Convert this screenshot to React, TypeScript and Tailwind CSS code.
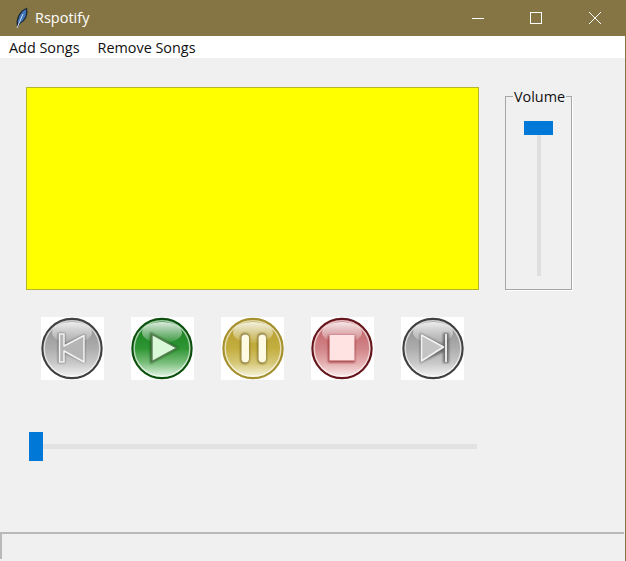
import { ReactNode } from "react";

const font = "font-['Open_Sans','Noto_Sans',sans-serif]";

type Tone = { id: string; ring: string; top: string; mid: string; low: string; light: string };

const GRAY: Tone = { id: "gray", ring: "#3f3f3f", top: "#8a8a8a", mid: "#adadad", low: "#c9c9c9", light: "#f7f7f7" };
const GREEN: Tone = { id: "green", ring: "#0b4f10", top: "#14791b", mid: "#2f9634", low: "#7cc07e", light: "#eefaee" };
const GOLD: Tone = { id: "gold", ring: "#a5902f", top: "#b39b2a", mid: "#c4ae3f", low: "#d6c878", light: "#fbf8e6" };
const RED: Tone = { id: "red", ring: "#65141a", top: "#bd5c60", mid: "#d18487", low: "#e5afb0", light: "#fdf0f0" };

function GlossyButton({ tone, dx = 0, children }: { tone: Tone; dx?: number; children: ReactNode }) {
  return (
    <div className="w-[63px] h-[63px] bg-white shrink-0">
      <svg width="63" height="63" viewBox="0 0 63 63">
        <defs>
          <linearGradient id={`${tone.id}-body`} x1="0" y1="0" x2="0" y2="1">
            <stop offset="0" stopColor={tone.top} />
            <stop offset="0.5" stopColor={tone.mid} />
            <stop offset="0.75" stopColor={tone.low} />
            <stop offset="1" stopColor={tone.light} />
          </linearGradient>
          <linearGradient id={`${tone.id}-gloss`} x1="0" y1="0" x2="0" y2="1">
            <stop offset="0" stopColor="#ffffff" stopOpacity="0.85" />
            <stop offset="1" stopColor="#ffffff" stopOpacity="0.08" />
          </linearGradient>
          <filter id={`${tone.id}-soft`} x="-20%" y="-20%" width="140%" height="140%">
            <feGaussianBlur stdDeviation="0.45" />
          </filter>
          <filter id={`${tone.id}-shade`} x="-30%" y="-30%" width="160%" height="160%">
            <feGaussianBlur stdDeviation="1.3" />
          </filter>
        </defs>
        <g transform={`translate(${dx} 0)`} filter={`url(#${tone.id}-soft)`}>
          <circle cx="31" cy="31.5" r="29.6" fill={`url(#${tone.id}-body)`} stroke={tone.ring} strokeWidth="2.2" />
          <circle cx="31" cy="31.5" r="27.8" fill="none" stroke="#ffffff" strokeOpacity="0.6" strokeWidth="1.4" />
          <ellipse cx="31" cy="15.5" rx="20" ry="10.5" fill={`url(#${tone.id}-gloss)`} />
          {children}
        </g>
      </svg>
    </div>
  );
}

export default function App() {
  return (
    <div className={`${font} w-[626px] h-[561px] flex flex-col bg-[#f0f0f0] border-r border-[#857545] overflow-hidden`}>
      {/* title bar */}
      <div className="h-9 shrink-0 bg-[#857545] flex items-center text-white">
        <svg width="16" height="22" viewBox="0 0 16 22" className="ml-[14px]">
          <path d="M3.5 19 C2 12 6 4 12.5 1.5 C14 8 11 14 5.5 16.5 Z" fill="#3f74b8" stroke="#1d2733" strokeWidth="1.3" />
          <path d="M3 21 L9 7" stroke="#c8dcf2" strokeWidth="1" />
        </svg>
        <span className="ml-[5px] text-[14.5px] text-white">Rspotify</span>
        <div className="ml-auto flex items-center h-full pr-px">
          <div className="w-[56px] flex justify-center">
            <div className="w-3 h-px bg-white" />
          </div>
          <div className="w-[60px] flex justify-center">
            <div className="w-[12px] h-[12px] border border-white" />
          </div>
          <div className="w-[58px] flex justify-center">
            <svg width="12" height="12" viewBox="0 0 12 12" stroke="white" strokeWidth="1">
              <path d="M0 0 L12 12 M12 0 L0 12" />
            </svg>
          </div>
        </div>
      </div>

      {/* menu */}
      <div className="h-[22px] shrink-0 bg-white flex items-center gap-[18px] pl-[9px] pt-px text-[14.4px] text-[#111]">
        <span>Add Songs</span>
        <span>Remove Songs</span>
      </div>

      {/* body */}
      <div className="flex-1 flex flex-col pl-[26px] pt-[29px]">
        <div className="flex items-end gap-[26px]">
          <div className="w-[453px] h-[203px] bg-[#ffff00] border border-[#b5b52c]" />
          <div className="relative w-[67px] h-[194px] border border-[#a6a6a6] shadow-[1px_1px_0_#ffffff] flex flex-col items-center">
            <span className="absolute -top-[9px] left-[7px] bg-[#f0f0f0] px-px text-[14.4px] leading-[17px] text-[#111]">Volume</span>
            <div className="relative w-1 h-[155px] mt-[24px] bg-[#dfdfdf]">
              <div className="absolute top-0 -left-[13px] w-[29px] h-[14px] bg-[#0078d7]" />
            </div>
          </div>
        </div>

        <div className="flex gap-[27px] pl-[15px] mt-[27px]">
          <GlossyButton tone={GRAY}>
            <path d="M17 16 H24 V27 L44 17 V46 L24 36 V46 H17 Z" fill="#3c3c3c" opacity="0.6" filter="url(#gray-shade)" />
            <path d="M18.5 17 H23 V29 L43 18.5 V45 L23 34 V45 H18.5 Z" fill="#b5b5b5" stroke="#f4f4f4" strokeWidth="1.5" strokeLinejoin="round" />
          </GlossyButton>
          <GlossyButton tone={GREEN}>
            <path d="M19 15 L48 31 L19 47 Z" fill="#27501f" opacity="0.75" filter="url(#green-shade)" />
            <path d="M21 17.5 L45.5 31 L21 44.5 Z" fill="#d8f8d8" stroke="#5b7f55" strokeWidth="1.4" strokeLinejoin="round" />
          </GlossyButton>
          <GlossyButton tone={GOLD} dx={1}>
            <rect x="18.5" y="16" width="9" height="31" rx="4.5" fill="#5a4a10" opacity="0.7" filter="url(#gold-shade)" />
            <rect x="35.5" y="16" width="9" height="31" rx="4.5" fill="#5a4a10" opacity="0.7" filter="url(#gold-shade)" />
            <rect x="19.5" y="17.5" width="7.5" height="28" rx="3.7" fill="#fffbe2" />
            <rect x="36.5" y="17.5" width="7.5" height="28" rx="3.7" fill="#fffbe2" />
          </GlossyButton>
          <GlossyButton tone={RED}>
            <rect x="17" y="18.5" width="27" height="27" fill="#8f1b1f" opacity="0.7" filter="url(#red-shade)" />
            <rect x="18.5" y="18" width="25" height="25.5" fill="#ffe2e2" />
          </GlossyButton>
          <GlossyButton tone={GRAY} dx={1}>
            <path d="M18 16 L41 28 V16 H47 V46 H41 V35 L18 46 Z" fill="#3c3c3c" opacity="0.6" filter="url(#gray-shade)" />
            <path d="M19.5 18 L41.5 30 L19.5 44 Z" fill="#c4c4c4" stroke="#f4f4f4" strokeWidth="1.5" strokeLinejoin="round" />
            <path d="M44 17 V45" stroke="#f7f7f7" strokeWidth="1.8" />
          </GlossyButton>
        </div>

        <div className="relative w-[448px] h-[5px] ml-[3px] mt-[64px] bg-[#e2e2e2]">
          <div className="absolute -top-[12px] left-0 w-[14px] h-[29px] bg-[#0078d7]" />
        </div>

        <div className="-ml-[26px] mr-px mt-auto mb-[2px] h-[27px] border-t-2 border-l-2 border-[#b9b9b9]" />
      </div>
    </div>
  );
}
